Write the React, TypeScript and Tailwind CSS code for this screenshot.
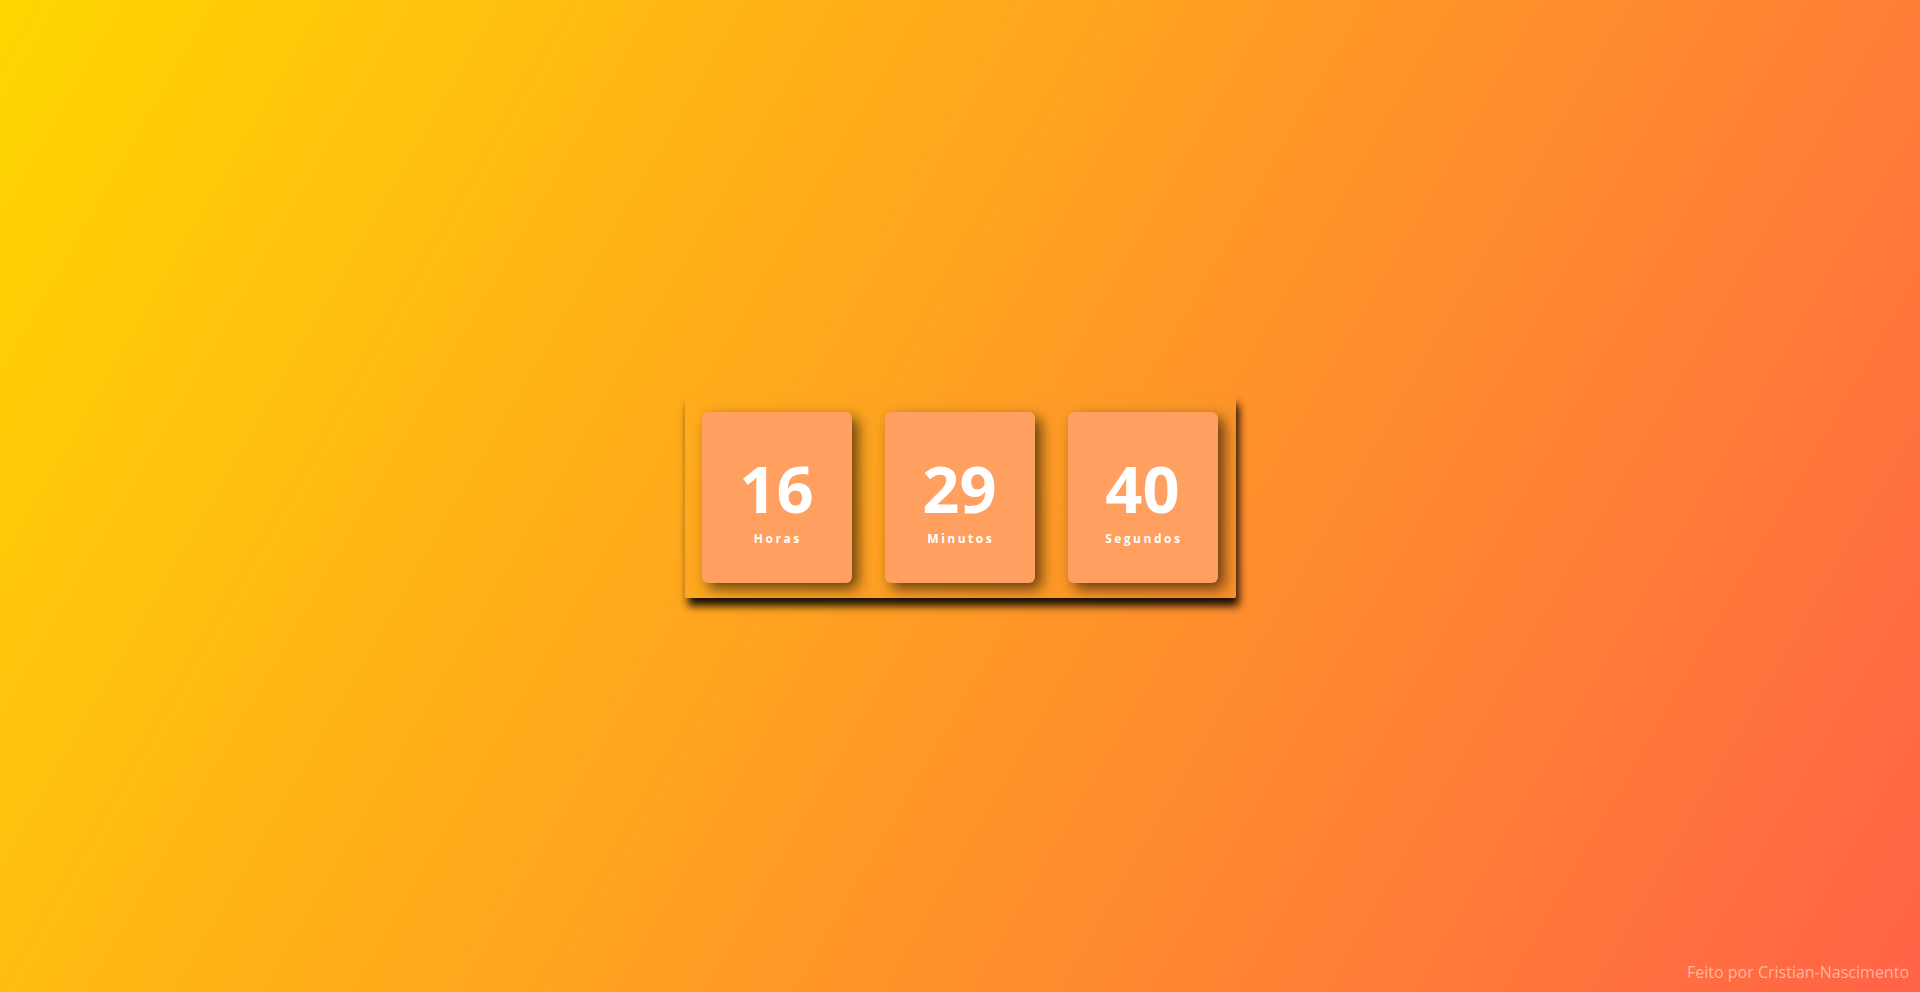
import React from 'react';

const units = [
  { value: '16', label: 'Horas' },
  { value: '29', label: 'Minutos' },
  { value: '40', label: 'Segundos' },
];

function TimeCard({ value, label }: { value: string; label: string }) {
  return (
    <div className="w-[150px] h-[171px] rounded-[6px] bg-[#ff9f60] shadow-[6px_6px_14px_rgba(0,0,0,0.6)] flex flex-col items-center justify-center pt-[6px] text-white">
      <span className="text-[65px] leading-none font-bold">{value}</span>
      <span className="mt-[12px] text-[12px] leading-none font-bold tracking-[2.5px] pl-[2.5px]">{label}</span>
    </div>
  );
}

export default function App() {
  return (
    <div className="relative h-screen w-full overflow-hidden bg-[linear-gradient(120deg,#ffd700,#ff6347)] font-['Open_Sans',sans-serif] flex items-center justify-center">
      <div className="flex gap-[33px] pl-[17px] pr-[18px] pt-[16px] pb-[15px] mt-[2px] rounded-[2px] bg-[linear-gradient(120deg,#ffac1c,#fb8f2c)] shadow-[3px_8px_9px_rgba(0,0,0,0.9)]">
        {units.map(u => (
          <TimeCard key={u.label} value={u.value} label={u.label} />
        ))}
      </div>

      <footer className="absolute bottom-[8px] right-[11px] text-[16px] text-white/50">
        Feito por Cristian-Nascimento
      </footer>
    </div>
  );
}
